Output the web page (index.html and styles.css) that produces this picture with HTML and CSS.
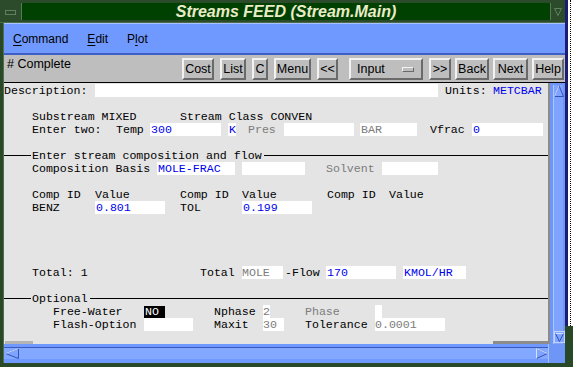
FILE: index.html
```html
<!DOCTYPE html>
<html lang="en">
<head>
    <meta charset="UTF-8">
    <meta name="viewport" content="width=device-width, initial-scale=1.0">
    <title>Streams FEED (Stream.Main)</title>
    <link rel="stylesheet" href="styles.css">
</head>
<body>
<div class="screen">
    <div class="window">

        <!-- Window title bar -->
        <div class="titlebar">
            <div class="tb-box tb-left"><span class="tb-menu-btn"></span></div>
            <div class="tb-title">Streams FEED (Stream.Main)</div>
            <div class="tb-box tb-right">
                <svg width="8" height="8" viewBox="0 0 8 8"><path d="M0.5 0.5 H7.5 L4 7.5 Z" fill="none" stroke="#5f805f"/></svg>
            </div>
        </div>

        <div class="client">
            <!-- Menu bar -->
            <div class="menubar">
                <span class="menu-item"><u>C</u>ommand</span>
                <span class="menu-item"><u>E</u>dit</span>
                <span class="menu-item">P<u>l</u>ot</span>
            </div>

            <!-- Tool bar -->
            <div class="toolbar">
                <div class="status"># Complete</div>
                <div class="buttons">
                    <button class="btn w32">Cost</button>
                    <button class="btn w26">List</button>
                    <button class="btn w16">C</button>
                    <button class="btn w37">Menu</button>
                    <button class="btn w21">&lt;&lt;</button>
                    <button class="btn option w74"><span>Input</span><span class="opt-ind"></span></button>
                    <button class="btn w22">&gt;&gt;</button>
                    <div class="nav-group">
                        <button class="btn w34">Back</button>
                        <button class="btn w35">Next</button>
                        <button class="btn w32">Help</button>
                    </div>
                </div>
            </div>

            <!-- Form + scrollbars -->
            <div class="pane">
                <div class="form">
                    <div class="row desc">
                        <span class="w91">Description:</span>
                        <span class="fld w343"></span>
                        <span class="w48 ml7">Units:</span>
                        <span class="blue w50">METCBAR</span>
                    </div>

                    <div class="row in1 gap13">
                        <span class="w148">Substream MIXED</span>
                        <span>Stream Class CONVEN</span>
                    </div>
                    <div class="row in1">
                        <span class="w84">Enter two:</span>
                        <span class="w34">Temp</span>
                        <span class="fld blue w71">300</span>
                        <span class="fld blue w8 ml7">K</span>
                        <span class="dim w36 ml12">Pres</span>
                        <span class="fld w70"></span>
                        <span class="fld dim w57 ml6">BAR</span>
                        <span class="w42 ml13">Vfrac</span>
                        <span class="fld blue w71">0</span>
                    </div>

                    <div class="section gap13"><span class="sec-text">Enter stream composition and flow</span></div>
                    <div class="row in1">
                        <span class="w125">Composition Basis</span>
                        <span class="fld blue w78">MOLE-FRAC</span>
                        <span class="fld w63 ml7"></span>
                        <span class="dim w56 ml21">Solvent</span>
                        <span class="fld w56"></span>
                    </div>

                    <div class="row in1 gap13">
                        <span class="w63">Comp ID</span>
                        <span class="w85">Value</span>
                        <span class="w62">Comp ID</span>
                        <span class="w85">Value</span>
                        <span class="w62">Comp ID</span>
                        <span>Value</span>
                    </div>
                    <div class="row in1">
                        <span class="w63">BENZ</span>
                        <span class="fld blue w70">0.801</span>
                        <span class="w62 ml15">TOL</span>
                        <span class="fld blue w70">0.199</span>
                    </div>

                    <div class="row in1 gap52">
                        <span class="w168">Total: 1</span>
                        <span class="w42">Total</span>
                        <span class="fld dim w41 nopad">MOLE</span>
                        <span class="w41 ml2">-Flow</span>
                        <span class="fld blue w70">170</span>
                        <span class="fld blue w63 ml7">KMOL/HR</span>
                    </div>

                    <div class="section gap13"><span class="sec-text">Optional</span></div>
                    <div class="row in2">
                        <span class="w91">Free-Water</span>
                        <span class="fld dark w21">NO</span>
                        <span class="w49 ml49">Nphase</span>
                        <span class="fld dim w7 nopad">2</span>
                        <span class="dim w70 ml35">Phase</span>
                        <span class="fld w7"></span>
                    </div>
                    <div class="row in2">
                        <span class="w91">Flash-Option</span>
                        <span class="fld w49"></span>
                        <span class="w49 ml21">Maxit</span>
                        <span class="fld dim w21 nopad">30</span>
                        <span class="w70 ml21">Tolerance</span>
                        <span class="fld dim w70 nopad">0.0001</span>
                    </div>

                    <div class="form-foot"><span class="foot-l"></span><span class="foot-r"></span></div>
                </div>

                <div class="vscroll">
                    <div class="vtrough">
                        <svg class="arrow" width="10" height="12" viewBox="0 0 10 12">
                            <path d="M5 0.5 L9.5 11.5 H0.5 Z" fill="#7ea4ff" stroke="#3552b8"/>
                            <path d="M0.5 11.5 L5 0.5" stroke="#d6e2ff" fill="none"/>
                        </svg>
                        <svg class="arrow down" width="11" height="12" viewBox="0 0 11 12">
                            <rect x="0.5" y="0.5" width="10" height="11" fill="#7ea4ff" stroke="#c4d4ff"/>
                            <path d="M1.5 2.5 H9.5 L5.5 10.5 Z" fill="none" stroke="#3552b8"/>
                            <path d="M1.5 2.5 H9.5" stroke="#d6e2ff"/>
                        </svg>
                    </div>
                </div>
            </div>

            <div class="hscroll">
                <div class="htrough">
                    <svg width="14" height="11" viewBox="0 0 14 11">
                        <path d="M0.5 5.5 L13.5 0.5 V10.5 Z" fill="#7ea4ff" stroke="#3552b8"/>
                        <path d="M0.5 5.5 L13.5 0.5" stroke="#d6e2ff" fill="none"/>
                    </svg>
                    <svg width="12" height="11" viewBox="0 0 12 11">
                        <path d="M11.5 5.5 L0.5 0.5 V10.5 Z" fill="#7ea4ff" stroke="#3552b8"/>
                        <path d="M0.5 10.5 V0.5 L11.5 5.5" stroke="#d6e2ff" fill="none"/>
                    </svg>
                </div>
                <div class="corner"></div>
            </div>
        </div>
    </div>

    <!-- Edge of the window behind -->
    <div class="behind">
        <div class="behind-top">
            <span class="dots"></span>
        </div>
        <div class="behind-bottom"></div>
    </div>
</div>
</body>
</html>
```

FILE: styles.css
```css
body {
    margin: 0;
    background: #284828;
    font-family: "Liberation Sans", Arial, sans-serif;
}

.screen {
    display: flex;
    width: 573px;
    height: 367px;
    overflow: hidden;
}

/* Window frame */
.window {
    width: 565px;
    height: 367px;
    display: flex;
    flex-direction: column;
    background: #284828;
    padding-bottom: 4px;
    box-sizing: border-box;
}

.titlebar {
    display: flex;
    height: 23px;
    padding: 3px 0 2px;
    box-sizing: border-box;
    background: #2b4b2b;
    border-bottom: 1px solid #4c6c4c;
}

.tb-box {
    display: flex;
    align-items: center;
    justify-content: center;
    box-sizing: border-box;
}

.tb-left {
    width: 22px;
    border-right: 1px solid #587858;
}

.tb-menu-btn {
    width: 11px;
    height: 5px;
    border: 1px solid #5f805f;
    box-sizing: border-box;
    margin-top: 2px;
}

.tb-right {
    width: 15px;
    border-left: 1px solid #587858;
}

.tb-title {
    flex: 1;
    background: #004000;
    color: #eaecc8;
    font-size: 16px;
    font-weight: bold;
    font-style: italic;
    line-height: 18px;
    text-align: center;
}

.client {
    flex: 1;
    display: flex;
    flex-direction: column;
    margin-left: 3px;
    border-left: 1px solid #4e6e4e;
}

/* Menu bar */
.menubar {
    height: 32px;
    box-sizing: border-box;
    display: flex;
    align-items: center;
    gap: 19px;
    padding-left: 9px;
    background: #7099ff;
    border-top: 1px solid #a9c3ff;
    border-bottom: 2px solid #3d5fc6;
    font-size: 12px;
}

.menu-item u {
    text-underline-offset: 2px;
}

/* Tool bar */
.toolbar {
    height: 28px;
    box-sizing: border-box;
    display: flex;
    justify-content: space-between;
    background: #bebebe;
    border-bottom: 1px solid #000;
    font-size: 12.5px;
}

.status {
    padding: 2px 0 0 3px;
    line-height: 14px;
}

.buttons {
    display: flex;
    gap: 6px;
    margin: 3px 1px 0 0;
}

.nav-group {
    display: flex;
    gap: 4px;
    margin-left: -2px;
}

.btn {
    height: 22px;
    padding: 0;
    margin: 0;
    box-sizing: border-box;
    background: #bebebe;
    border: 2px solid;
    border-color: #f2f2f2 #6a6a6a #6a6a6a #f2f2f2;
    font-family: "Liberation Sans", Arial, sans-serif;
    font-size: 12.5px;
    color: #000;
    text-align: center;
}

.btn.option {
    margin-left: 5px;
    display: flex;
    align-items: center;
    justify-content: space-between;
    padding: 0 7px 0 6px;
}

.opt-ind {
    width: 12px;
    height: 5px;
    box-sizing: border-box;
    border: 1px solid;
    border-color: #f2f2f2 #6a6a6a #6a6a6a #f2f2f2;
    margin-top: 1px;
}

/* Form area */
.pane {
    display: flex;
    height: 261px;
}

.form {
    width: 544px;
    height: 261px;
    display: flex;
    flex-direction: column;
    overflow: hidden;
    background: #e4e4e4;
    font-family: "Liberation Mono", "Courier New", monospace;
    font-size: 11.6px;
    color: #000;
}

.row {
    display: flex;
    flex: none;
    height: 13px;
    line-height: 13px;
    white-space: pre;
}

.row > span {
    flex: none;
    overflow: hidden;
}

.desc {
    margin-top: 1px;
}

.in1 { padding-left: 28px; }
.in2 { padding-left: 49px; }

.gap13 { margin-top: 13px; }
.gap52 { margin-top: 52px; }

.fld {
    background: #fff;
    padding-left: 1px;
    box-sizing: border-box;
}

.fld.nopad { padding-left: 0; }

.fld.dark {
    background: #000;
    color: #fff;
    height: 12px;
    margin-top: 1px;
    line-height: 12px;
}

.blue { color: #0000f0; }
.dim { color: #7c7c7c; }

.section {
    display: flex;
    align-items: center;
    flex: none;
    height: 13px;
    line-height: 13px;
    white-space: pre;
}

.section::before {
    content: "";
    width: 27px;
    height: 1px;
    margin-right: 1px;
    background: #000;
}

.section::after {
    content: "";
    flex: 1;
    height: 1px;
    margin-left: 2px;
    background: #000;
}

.form-foot {
    margin-top: auto;
    height: 3px;
    display: flex;
    justify-content: space-between;
    flex: none;
}

.foot-l {
    width: 28px;
    margin-left: 1px;
    background: #b4b4b4;
}

.foot-r {
    width: 55px;
    background: #8c8c8c;
}

/* widths */
.w7 { width: 7px; }
.w8 { width: 8px; }
.w16 { width: 16px; }
.w21 { width: 21px; }
.w22 { width: 22px; }
.w26 { width: 26px; }
.w32 { width: 32px; }
.w34 { width: 34px; }
.w35 { width: 35px; }
.w36 { width: 36px; }
.w37 { width: 37px; }
.w41 { width: 41px; }
.w42 { width: 42px; }
.w48 { width: 48px; }
.w49 { width: 49px; }
.w50 { width: 50px; }
.w56 { width: 56px; }
.w57 { width: 57px; }
.w62 { width: 62px; }
.w63 { width: 63px; }
.w70 { width: 70px; }
.w71 { width: 71px; }
.w74 { width: 74px; }
.w78 { width: 78px; }
.w84 { width: 84px; }
.w85 { width: 85px; }
.w91 { width: 91px; }
.w125 { width: 125px; }
.w148 { width: 148px; }
.w168 { width: 168px; }
.w343 { width: 343px; }

/* gaps */
.ml2 { margin-left: 2px; }
.ml6 { margin-left: 6px; }
.ml7 { margin-left: 7px; }
.ml12 { margin-left: 12px; }
.ml13 { margin-left: 13px; }
.ml15 { margin-left: 15px; }
.ml21 { margin-left: 21px; }
.ml35 { margin-left: 35px; }
.ml49 { margin-left: 49px; }

/* Scrollbars */
.vscroll {
    width: 17px;
    box-sizing: border-box;
    border-left: 2px solid #8c8c8c;
    background: #6e96f6;
    padding: 2px 2px 0 3px;
}

.vtrough {
    height: 100%;
    display: flex;
    flex-direction: column;
    justify-content: space-between;
    background: #7ea4ff;
    border-left: 1px solid #aec6ff;
    box-sizing: border-box;
}

.arrow {
    display: block;
}

.arrow.down {
    margin-bottom: 1px;
}

.hscroll {
    display: flex;
    height: 19px;
    background: #7099ff;
}

.htrough {
    width: 544px;
    height: 12px;
    margin-top: 3px;
    box-sizing: border-box;
    display: flex;
    justify-content: space-between;
    align-items: center;
    padding-left: 1px;
    background: #82a8ff;
    border-top: 1px solid #3a5ac0;
}

.htrough svg {
    display: block;
}

.corner {
    flex: 1;
    background: #6e96f6;
    border-left: 1px solid #a9c3ff;
}

/* Window behind */
.behind {
    width: 8px;
    display: flex;
    flex-direction: column;
}

.behind-top {
    height: 326px;
    background: #fff;
    border-left: 3px solid #1c1c74;
    box-sizing: border-box;
    padding-left: 2px;
}

.dots {
    display: block;
    height: 100%;
    border-left: 1px dotted #000;
}

.behind-bottom {
    flex: 1;
    background: #284828;
}
```
